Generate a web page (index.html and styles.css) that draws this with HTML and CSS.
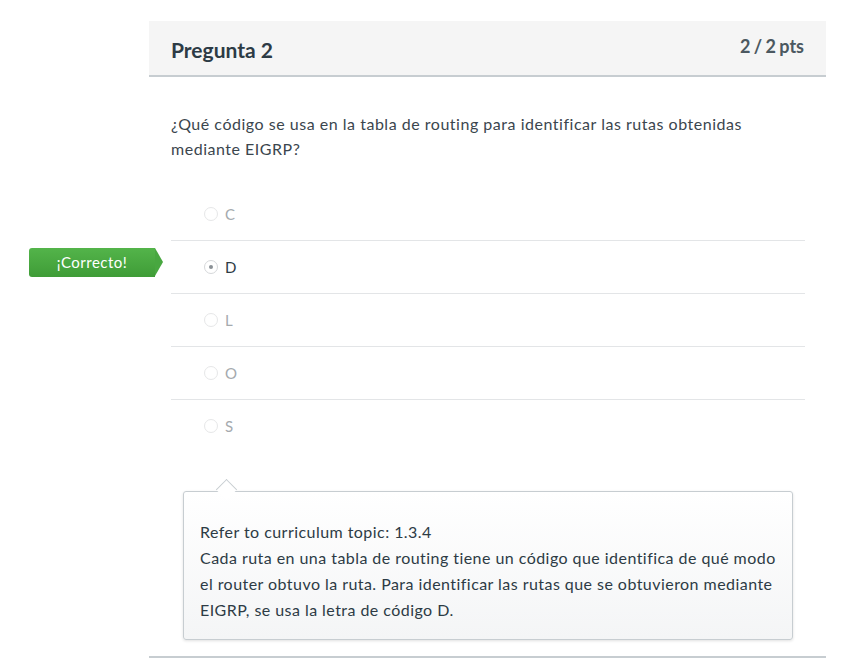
FILE: index.html
```html
<!DOCTYPE html>
<html lang="es">
<head>
    <meta charset="UTF-8">
    <title>Pregunta 2</title>
    <link rel="stylesheet" href="styles.css">
</head>
<body>
    <div class="quiz">
        <div class="question">
            <div class="question-header">
                <h2>Pregunta 2</h2>
                <span class="points">2 / 2 pts</span>
            </div>
            <div class="question-body">
                <p class="question-text">¿Qué código se usa en la tabla de routing para identificar las rutas obtenidas mediante EIGRP?</p>

                <div class="answers">
                    <div class="answer">
                        <span class="radio"></span>
                        <span class="label">C</span>
                    </div>
                    <div class="answer selected">
                        <span class="badge">¡Correcto!</span>
                        <span class="radio"></span>
                        <span class="label">D</span>
                    </div>
                    <div class="answer">
                        <span class="radio"></span>
                        <span class="label">L</span>
                    </div>
                    <div class="answer">
                        <span class="radio"></span>
                        <span class="label">O</span>
                    </div>
                    <div class="answer">
                        <span class="radio"></span>
                        <span class="label">S</span>
                    </div>
                </div>

                <div class="comment">
                    Refer to curriculum topic: 1.3.4<br>
                    Cada ruta en una tabla de routing tiene un código que identifica de qué modo el router obtuvo la ruta. Para identificar las rutas que se obtuvieron mediante EIGRP, se usa la letra de código D.
                </div>
            </div>
        </div>
    </div>
</body>
</html>
```

FILE: styles.css
```css
body {
    margin: 0;
    background: #fff;
    font-family: Lato, "Open Sans", sans-serif;
    color: #2d3b45;
}
.quiz {
    padding: 21px 0 0 149px;
}
.question {
    width: 677px;
    border-bottom: 2px solid #c7cdd1;
    padding-bottom: 16px;
}
.question-header {
    height: 54px;
    background: #f5f5f5;
    border-bottom: 2px solid #c7cdd1;
    display: flex;
    justify-content: space-between;
    padding: 0 22px;
}
.question-header h2 {
    margin: 0;
    padding-top: 16px;
    font-size: 21px;
    font-weight: 700;
    color: #2d3b45;
}
.points {
    padding-top: 14px;
    font-size: 18px;
    font-weight: 700;
    word-spacing: -1px;
    color: #4b5860;
}
.question-body {
    padding: 0 21px 0 22px;
}
.question-text {
    margin: 34px 0 27px;
    font-size: 16px;
    letter-spacing: 0.52px;
    line-height: 25px;
    color: #3b464e;
}
.answers {
    display: flex;
    flex-direction: column;
}
.answer {
    position: relative;
    height: 52px;
    display: flex;
    align-items: center;
    padding-left: 33px;
    border-bottom: 1px solid #e3e5e7;
    font-size: 15px;
    color: #a5aaae;
}
.answer:last-child {
    border-bottom: none;
}
.radio {
    width: 12px;
    height: 12px;
    border: 1px solid #e6e7e8;
    border-radius: 50%;
    margin-right: 7px;
    display: flex;
    align-items: center;
    justify-content: center;
}
.selected {
    color: #2d3b45;
}
.selected .radio {
    border-color: #d6d8da;
}
.selected .radio::after {
    content: "";
    width: 4px;
    height: 4px;
    border-radius: 50%;
    background: #8a9095;
}
.badge {
    position: absolute;
    left: -142px;
    top: 7px;
    width: 126px;
    height: 29px;
    line-height: 29px;
    text-align: center;
    color: #fff;
    font-size: 15px;
    letter-spacing: 0.5px;
    background: linear-gradient(#53b44a, #3f9c37);
    border-radius: 3px 0 0 3px;
}
.badge::after {
    content: "";
    position: absolute;
    right: -8px;
    top: 0;
    border-top: 14.5px solid transparent;
    border-bottom: 14.5px solid transparent;
    border-left: 8px solid #48a740;
}
.comment {
    position: relative;
    margin: 39px 12px 0;
    padding: 27px 10px 16px 16px;
    border: 1px solid #c7cdd1;
    border-radius: 3px;
    background: linear-gradient(#fff, #f4f5f6);
    box-shadow: 0 1px 3px rgba(0, 0, 0, 0.12);
    font-size: 16px;
    letter-spacing: 0.45px;
    line-height: 26px;
}
.comment::before {
    content: "";
    position: absolute;
    left: 35px;
    top: -10px;
    width: 14px;
    height: 14px;
    background: #fff;
    border-top: 1px solid #c7cdd1;
    border-left: 1px solid #c7cdd1;
    transform: rotate(45deg);
}
```
